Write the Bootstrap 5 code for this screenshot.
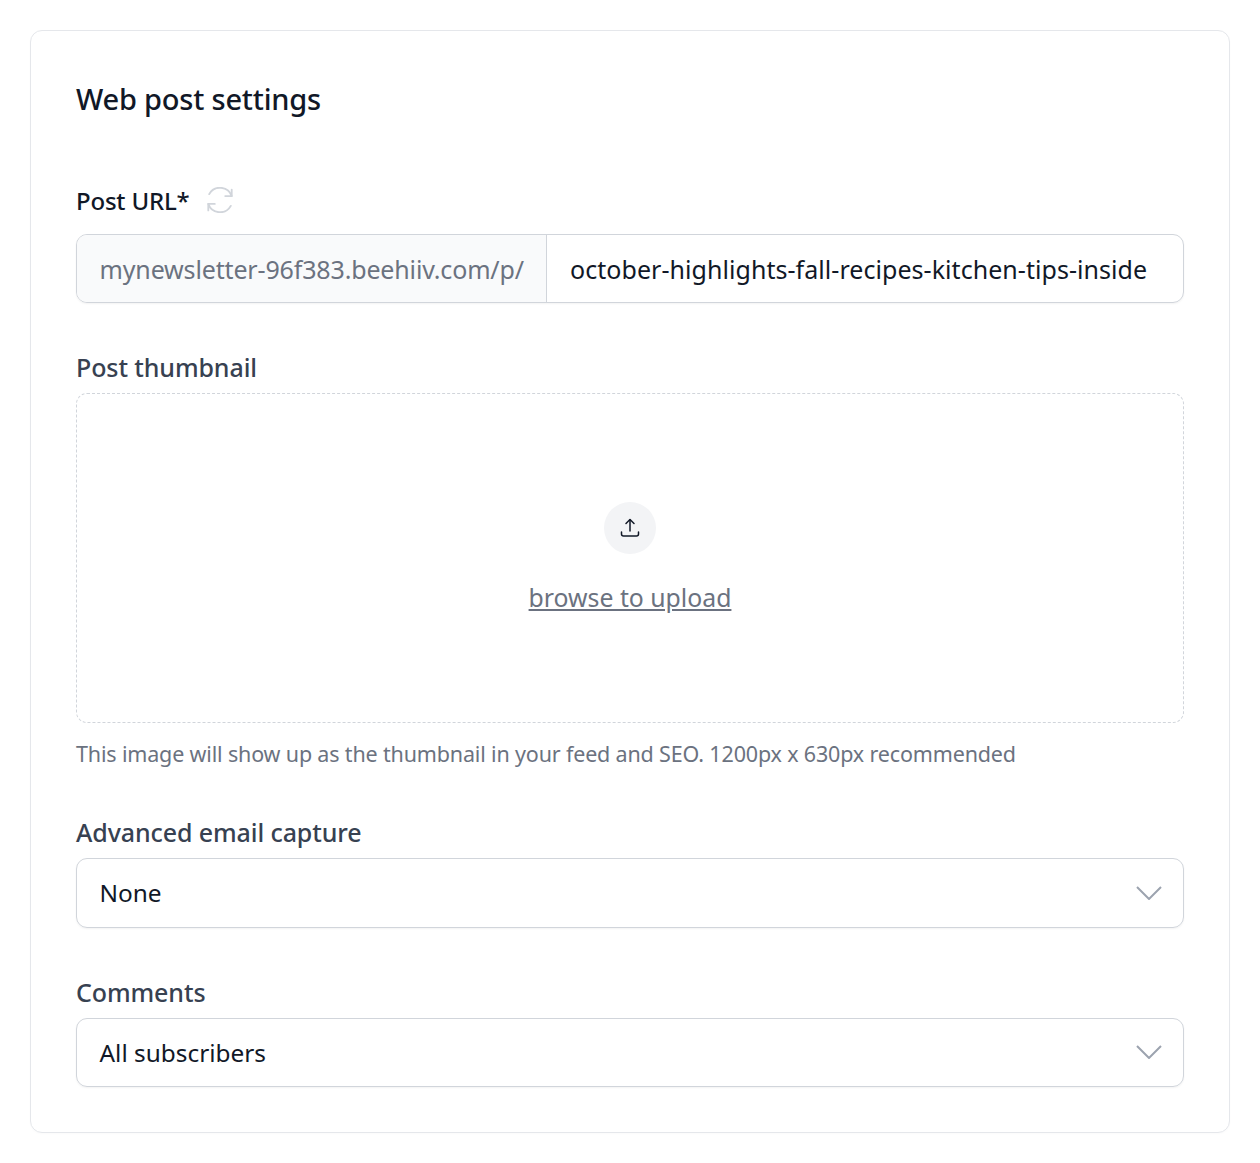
<!DOCTYPE html>
<html lang="en">
<head>
  <meta charset="UTF-8" />
  <meta name="viewport" content="width=device-width, initial-scale=1.0" />
  <title>Web post settings</title>
  <link href="https://cdn.jsdelivr.net/npm/bootstrap@5.3.0/dist/css/bootstrap.min.css" rel="stylesheet" />
  <style>
    body { font-family: "Noto Sans", "Open Sans", sans-serif; background: #fff; padding: 30px; }
    .settings-card { border: 1px solid #e5e7eb; border-radius: 12px; height: 1103px; padding: 45px; box-shadow: 0 1px 2px rgba(0,0,0,.02); }
    .settings-title { font-size: 29px; line-height: 40px; font-weight: 500; color: #111827; margin: 3px 0 65px; letter-spacing: -.2px; }
    .url-label-row { margin-bottom: 16px; gap: 18px; }
    .refresh-icon { margin-top: -3px; }
    .field-label { font-size: 25px; line-height: 32px; padding-bottom: 2px; font-weight: 500; color: #374151; margin: 0 0 8px; display: block; letter-spacing: -.1px; }
    .field-label.dark { font-size: 24px; line-height: 34px; padding-bottom: 0; letter-spacing: -.2px; color: #111827; margin: 0; }
    .url-group { height: 69px; border: 1px solid #d1d5db; border-radius: 11px; box-shadow: 0 1px 2px rgba(0,0,0,.05); overflow: hidden; margin-bottom: 48px; font-size: 25px; }
    .url-prefix { background: #f9fafb; color: #6b7280; border-right: 1px solid #d1d5db; padding: 2px 22px 0 22.5px; width: 470px; white-space: nowrap; letter-spacing: -.15px; }
    .url-slug { padding: 2px 23px 0; color: #111827; white-space: nowrap; letter-spacing: .05px; }
    .drop-zone { height: 330px; border: 1px dashed #d1d5db; border-radius: 11px; margin-bottom: 15px; }
    .upload-circle { width: 52px; height: 52px; border-radius: 50%; background: #f3f4f6; margin-bottom: 26px; }
    .upload-link { font-size: 24.8px; line-height: 34px; color: #6b7280; text-decoration: underline; }
    .help-text { font-size: 21.5px; line-height: 32px; color: #6b7280; margin: 0 0 46px; letter-spacing: -.16px; }
    .select-box { height: 69.5px; border: 1px solid #d1d5db; border-radius: 11px; box-shadow: 0 1px 2px rgba(0,0,0,.05); padding: 0 21px 0 22.5px; font-size: 24.4px; color: #111827; margin-bottom: 48px; }
    .select-text { padding-top: 2px; }
  </style>
</head>
<body>
  <div class="settings-card">
    <h2 class="settings-title">Web post settings</h2>

    <div class="url-label-row d-flex align-items-center">
      <label class="field-label dark">Post URL*</label>
      <svg class="refresh-icon" width="26" height="26" viewBox="2 2 20 20" fill="none" stroke="#d1d5db" stroke-width="1.4" stroke-linecap="round" stroke-linejoin="round"><path d="M16 9h5V4"/><path d="M21 9a9.5 9.5 0 0 0-17.3-1.5"/><path d="M8 15H3v5"/><path d="M3 15a9.5 9.5 0 0 0 17.3 1.5"/></svg>
    </div>
    <div class="url-group d-flex">
      <div class="url-prefix d-flex align-items-center">mynewsletter-96f383.beehiiv.com/p/</div>
      <div class="url-slug d-flex align-items-center flex-grow-1">october-highlights-fall-recipes-kitchen-tips-inside</div>
    </div>

    <label class="field-label">Post thumbnail</label>
    <div class="drop-zone d-flex flex-column align-items-center justify-content-center">
      <div class="upload-circle d-flex align-items-center justify-content-center">
        <svg width="22" height="22" viewBox="0 0 22 22" fill="none" stroke="#111827" stroke-width="1.5" stroke-linecap="round" stroke-linejoin="round"><path d="M11 14V3"/><path d="M7 6.5 11 2.5l4 4"/><path d="M2.5 15v2a2 2 0 0 0 2 2h13a2 2 0 0 0 2-2v-2"/></svg>
      </div>
      <a class="upload-link" href="#">browse to upload</a>
    </div>
    <p class="help-text">This image will show up as the thumbnail in your feed and SEO. 1200px x 630px recommended</p>

    <label class="field-label">Advanced email capture</label>
    <div class="select-box d-flex align-items-center justify-content-between">
      <span class="select-text">None</span>
      <svg width="26" height="14" viewBox="0 0 26 14" fill="none" stroke="#9ca3af" stroke-width="2"><path d="M1 1l12 12L25 1"/></svg>
    </div>

    <label class="field-label">Comments</label>
    <div class="select-box d-flex align-items-center justify-content-between">
      <span class="select-text">All subscribers</span>
      <svg width="26" height="14" viewBox="0 0 26 14" fill="none" stroke="#9ca3af" stroke-width="2"><path d="M1 1l12 12L25 1"/></svg>
    </div>
  </div>
  <script src="https://cdn.jsdelivr.net/npm/bootstrap@5.3.0/dist/js/bootstrap.bundle.min.js"></script>
</body>
</html>
